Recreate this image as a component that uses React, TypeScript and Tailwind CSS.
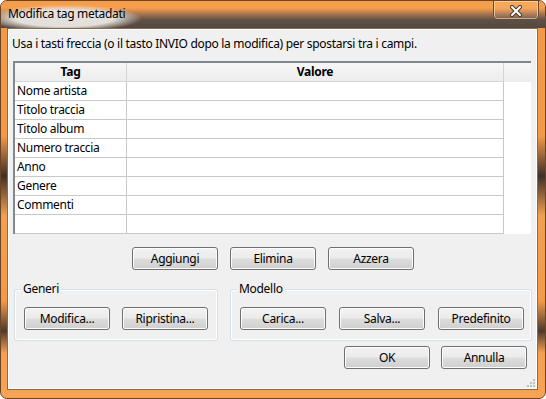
const font = { fontFamily: '"Noto Sans", "Open Sans", sans-serif' }

const rows = ['Nome artista', 'Titolo traccia', 'Titolo album', 'Numero traccia', 'Anno', 'Genere', 'Commenti', '']

function Btn({ children, className = '' }: { children: React.ReactNode; className?: string }) {
  return (
    <button
      className={
        'h-[23px] w-[86px] shrink-0 rounded-[3px] border border-[#707070] bg-[linear-gradient(to_bottom,#f2f2f2_0%,#ebebeb_48%,#dddddd_52%,#cfcfcf_100%)] shadow-[inset_0_0_0_1px_#fcfcfc] text-[12px] leading-none tracking-[-0.3px] text-black ' +
        className
      }
    >
      {children}
    </button>
  )
}

function Group({ label, className = '', children }: { label: string; className?: string; children: React.ReactNode }) {
  return (
    <div className={'relative h-[52px] rounded-[3px] border border-[#d5dfe5] shadow-[inset_0_0_0_1px_#fff] ' + className}>
      <span className="absolute -top-[9px] left-[6px] bg-[#f0f0f0] px-[2px] text-[12px] leading-[16px] text-black">
        {label}
      </span>
      <div className="flex gap-[12px] pl-[9px] pt-[17px]">{children}</div>
    </div>
  )
}

export default function App() {
  return (
    <div
      style={font}
      className="relative flex h-[399px] w-[546px] flex-col overflow-hidden rounded-[7px] border border-[#6b4526] bg-[linear-gradient(to_bottom,#f39a48_0px,#f39a48_135px,#3f3029_175px,#f0a050_215px,#f39a48_300px,#4d3a2e_330px,#f5a050_352px,#f7a455_399px)] tracking-[-0.3px] text-black"
    >
      {/* title bar */}
      <div className="relative h-[27px] shrink-0 bg-[linear-gradient(to_bottom,#f49d4b_0px,#f79f4c_7px,#a87550_13px,#5f5046_19px,#534840_27px)]">
        <div className="absolute left-0 top-[4px] h-[24px] w-[140px] bg-[radial-gradient(ellipse_at_45%_55%,rgba(232,228,224,0.97)_45%,rgba(232,228,224,0)_72%)]" />
        <span className="absolute left-[7px] top-[5px] text-[12px] leading-[16px] text-black">Modifica tag metadati</span>
        <div className="absolute right-[6px] -top-[1px] flex h-[20px] w-[46px] items-center justify-center rounded-b-[4px] border border-[#6a4a32] shadow-[inset_0_0_0_1px_rgba(255,235,210,0.55)] bg-[linear-gradient(to_bottom,rgba(255,200,140,0.25),rgba(255,255,255,0.05))]">
          <svg width="14" height="12" viewBox="0 0 14 12" className="mt-[1px]">
            <path d="M3 2 L11 10 M11 2 L3 10" stroke="#4a3a30" strokeWidth="4" strokeLinecap="round" />
            <path d="M3 2 L11 10 M11 2 L3 10" stroke="#ffffff" strokeWidth="2" strokeLinecap="round" />
          </svg>
        </div>
      </div>

      {/* client area */}
      <div className="relative mb-[8px] ml-[6px] mr-[7px] flex flex-1 flex-col border border-[#8b6a4c] bg-[#f0f0f0] shadow-[inset_0_0_0_1px_#ffffff]">
        <div className="h-[32px] pl-[4px] pt-[7px] text-[12px] leading-[16px]">
          Usa i tasti freccia (o il tasto INVIO dopo la modifica) per spostarsi tra i campi.
        </div>

        {/* table */}
        <div className="ml-[5px] flex h-[173px] w-[518px] border-l-2 border-t-2 border-[#828790] bg-white">
          <div className="flex w-[489px] flex-col">
            <div className="grid h-[19px] grid-cols-[112px_377px] border-b border-[#d5d5d5] bg-[linear-gradient(to_bottom,#f7f7f7,#ededed)] text-[12px] font-bold">
              <div className="flex items-center justify-center border-r border-[#d5d5d5]">Tag</div>
              <div className="flex items-center justify-center border-r border-[#d5d5d5]">Valore</div>
            </div>
            {rows.map((r, i) => (
              <div key={i} className="grid h-[19px] grid-cols-[112px_377px] border-b border-[#c8c8c8] text-[12px]">
                <div className="flex items-center border-r border-[#c8c8c8] pl-[2px]">{r}</div>
                <div className="border-r border-[#c8c8c8]" />
              </div>
            ))}
          </div>
          <div className="flex flex-1 flex-col">
            <div className="h-[19px] bg-[linear-gradient(to_bottom,#f7f7f7,#ededed)]" />
          </div>
        </div>

        <div className="mt-[13px] flex gap-[12px] pl-[124px]">
          <Btn>Aggiungi</Btn>
          <Btn>Elimina</Btn>
          <Btn>Azzera</Btn>
        </div>

        <div className="mt-[19px] flex">
          <Group label="Generi" className="ml-[6px] w-[204px]">
            <Btn>Modifica...</Btn>
            <Btn>Ripristina...</Btn>
          </Group>
          <Group label="Modello" className="ml-[12px] w-[302px]">
            <Btn>Carica...</Btn>
            <Btn className="ml-[1px]">Salva...</Btn>
            <Btn className="ml-[1px]">Predefinito</Btn>
          </Group>
        </div>

        <div className="mt-[5px] flex justify-end gap-[11px] pr-[10px]">
          <Btn>OK</Btn>
          <Btn>Annulla</Btn>
        </div>

        <svg width="8" height="8" viewBox="0 0 8 8" className="absolute bottom-[2px] right-[2px]">
          {[
            [6, 0],
            [6, 3],
            [3, 3],
            [6, 6],
            [3, 6],
            [0, 6],
          ].map(([x, y], i) => (
            <rect key={i} x={x} y={y} width="2" height="2" fill="#b8c0c8" />
          ))}
        </svg>
      </div>
    </div>
  )
}
